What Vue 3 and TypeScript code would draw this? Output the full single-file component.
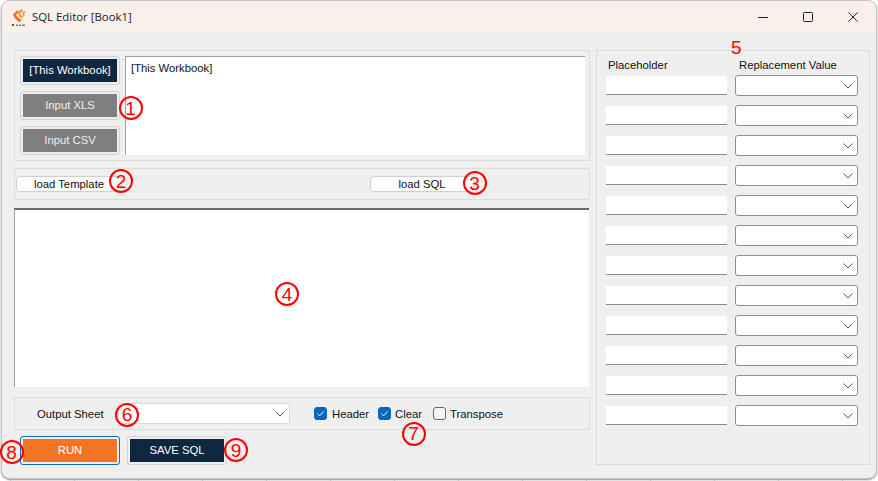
<script setup lang="ts">
const rows: number[] = Array.from({ length: 12 }, (_, i) => i)
const marks = [
  { n: '1', x: 130.5, y: 108 },
  { n: '2', x: 121, y: 181 },
  { n: '3', x: 474.5, y: 183 },
  { n: '4', x: 287, y: 294 },
  { n: '6', x: 127, y: 414.5 },
  { n: '7', x: 413.5, y: 433.5 },
  { n: '8', x: 11.5, y: 452 },
  { n: '9', x: 236, y: 450 },
]
</script>

<template>
  <div class="desk">
    <div class="win">
      <header class="titlebar">
        <div class="title-left">
          <svg class="logo" width="16" height="18" viewBox="0 0 16 18">
            <path d="M2 6.5 L6 2.5 L8 3 L5 7.5 L8 10 L11 13 L8 14 L4 10.5 Z" fill="#f36f1c" />
            <path d="M7 5 L10 1 L12 2 L9 6 L11.5 8.5 L10 10.5 Z" fill="#f58a33" />
            <path d="M11 5 L13 2.5 L14.5 4 L13 6.5 L14 8 L12.5 9.5 Z" fill="#f7a152" />
            <path d="M9 11.5 L11 9.5 L12.5 11 L11 13 Z" fill="#fbd39f" />
            <rect x="1" y="16" width="2" height="2" fill="#555" />
            <rect x="5" y="16.5" width="2" height="1.5" fill="#777" />
            <rect x="8" y="16.5" width="2" height="1.5" fill="#777" />
            <rect x="11" y="16.5" width="3" height="1.5" fill="#777" />
          </svg>
          <span class="title">SQL Editor [Book1]</span>
        </div>
        <div class="controls">
          <svg width="12" height="12" viewBox="0 0 12 12"><path d="M1 6.5H11" stroke="#222" stroke-width="1" /></svg>
          <svg width="12" height="12" viewBox="0 0 12 12"><rect x="1.5" y="1.5" width="9" height="9" rx="1" fill="none" stroke="#222" stroke-width="1" /></svg>
          <svg width="12" height="12" viewBox="0 0 12 12"><path d="M1.5 1.5L10.5 10.5M10.5 1.5L1.5 10.5" stroke="#222" stroke-width="1" /></svg>
        </div>
      </header>
      <main class="body">
        <section class="left">
          <div class="group inputs">
            <div class="btns">
              <button class="btn navy">[This Workbook]</button>
              <button class="btn gray">Input XLS</button>
              <button class="btn gray">Input CSV</button>
            </div>
            <div class="listbox">[This Workbook]</div>
          </div>
          <div class="group loaders">
            <button class="load tpl">load Template</button>
            <button class="load sql">load SQL</button>
          </div>
          <div class="editor"></div>
          <div class="group output">
            <span class="out-label">Output Sheet</span>
            <div class="combo wide">
              <svg width="10" height="6" viewBox="0 0 10 6"><path d="M0.5 0.5L5 5L9.5 0.5" fill="none" stroke="#555" /></svg>
            </div>
            <label class="check first"><span class="box on"><svg width="11" height="11" viewBox="0 0 11 11"><path d="M2.5 5.7L4.6 7.8L8.6 3.4" fill="none" stroke="#fff" stroke-width="1" /></svg></span>Header</label>
            <label class="check second"><span class="box on tight"><svg width="11" height="11" viewBox="0 0 11 11"><path d="M2.5 5.7L4.6 7.8L8.6 3.4" fill="none" stroke="#fff" stroke-width="1" /></svg></span>Clear</label>
            <label class="check"><span class="box tight"></span>Transpose</label>
          </div>
          <div class="actions">
            <button class="btn orange focus">RUN</button>
            <button class="btn navy">SAVE SQL</button>
          </div>
        </section>
        <aside class="group right">
          <div class="heads">
            <span class="head-a">Placeholder</span>
            <span class="head-b">Replacement Value</span>
          </div>
          <div v-for="r in rows" :key="r" class="row">
            <div class="field"></div>
            <div class="combo">
              <svg width="10" height="6" viewBox="0 0 10 6"><path d="M0.5 0.5L5 5L9.5 0.5" fill="none" stroke="#555" /></svg>
            </div>
          </div>
        </aside>
      </main>
      <span class="five">5</span>
    </div>
    <span v-for="m in marks" :key="m.n" class="mark" :style="{ left: m.x - 12 + 'px', top: m.y - 12 + 'px' }">{{ m.n }}</span>
  </div>
</template>

<style>
html, body { margin: 0; padding: 0; overflow: hidden; }
</style>

<style scoped>
.desk {
  position: relative;
  width: 878px;
  height: 481px;
  box-sizing: border-box;
  padding: 1px 2px 3px 2px;
  overflow: hidden;
  background-color: #fff;
  background-image: linear-gradient(to right, #d6d6d6 1px, transparent 1px);
  background-size: 64px 100%;
  background-position: 10px 0;
  font-family: "Liberation Sans", Arial, sans-serif;
  font-size: 11.3px;
  color: #111;
}
.win {
  position: relative;
  height: 100%;
  box-sizing: border-box;
  display: flex;
  flex-direction: column;
  border-radius: 8px;
  background: #efefef;
  box-shadow: 0 0 0 1px #c4c4c4, 0 1px 2px 1px #8e8e8e;
  overflow: hidden;
}
.titlebar {
  height: 31px;
  flex: none;
  display: flex;
  align-items: center;
  justify-content: space-between;
  background: #f9f0eb;
}
.title-left { display: flex; align-items: center; padding-left: 9px; }
.logo { margin-top: 1px; }
.title {
  margin-left: 5px;
  font-family: "Open Sans", sans-serif;
  font-size: 11.4px;
  color: #1c1c1c;
}
.controls { display: flex; gap: 33px; padding-right: 17px; }
.controls svg { display: block; }
.body {
  flex: 1;
  display: flex;
  gap: 6px;
  padding: 18px 6px 13px 12px;
  min-height: 0;
}
.left { width: 576px; display: flex; flex-direction: column; }
.group { border: 1px solid #dcdcdc; box-sizing: border-box; }
.inputs {
  height: 111px;
  display: flex;
  padding: 5px 4px 5px 5px;
  gap: 5px;
}
.btns { display: flex; flex-direction: column; gap: 6px; width: 100px; }
.btn {
  font: inherit;
  color: #fff;
  box-sizing: border-box;
  width: 100px;
  height: 29px;
  padding: 0 0 2px;
  border: 3px solid #efefef;
  border-radius: 3px;
  outline: 1px solid #d2d2d2;
  outline-offset: -1px;
}
.navy { background: #0e2841; }
.gray { background: #7f7f7f; color: #eee; }
.orange { background: #f67524; }
.focus { outline: 1px solid #0f6cbd; }
.listbox {
  flex: 1;
  background: #fff;
  border-top: 1px solid #a0a0a0;
  border-left: 1px solid #a0a0a0;
  padding: 5px;
  line-height: 12px;
  color: #111;
}
.loaders {
  margin-top: 7px;
  height: 32px;
  display: flex;
  align-items: center;
}
.load {
  font: inherit;
  color: #111;
  box-sizing: border-box;
  height: 16px;
  padding: 0;
  background: #fff;
  border: 1px solid #cfcfcf;
  border-radius: 4px;
}
.tpl { width: 106px; margin-left: 1px; text-align: center; }
.sql { width: 104px; margin-left: 248px; }
.editor {
  margin-top: 8px;
  width: 575px;
  height: 180px;
  box-sizing: border-box;
  background: #fff;
  border-top: 2px solid #696969;
  border-left: 1px solid #a0a0a0;
}
.output {
  margin-top: 10px;
  height: 33px;
  display: flex;
  align-items: center;
}
.out-label { margin-left: 22px; width: 81px; }
.combo {
  box-sizing: border-box;
  width: 123px;
  height: 21px;
  flex: none;
  display: flex;
  align-items: center;
  justify-content: flex-end;
  padding-right: 4px;
  background: #fff;
  border: 1px solid #8f8f8f;
  border-radius: 3px;
}
.combo.wide {
  width: 172px;
  border-color: #d8d8d8;
}
.check { display: flex; align-items: center; margin-left: 11px; }
.check.first { margin-left: 24px; }
.check.second { margin-left: 9px; }
.box {
  box-sizing: border-box;
  width: 13px;
  height: 13px;
  margin-right: 5px;
  border: 1px solid #666;
  border-radius: 3px;
  background: #f6f6f6;
  display: flex;
}
.box.tight { margin-right: 4px; }
.box.on { background: #0067c0; border-color: #0067c0; }
.actions { margin-top: 6px; display: flex; gap: 7px; padding-left: 6px; }
.right {
  width: 274px;
  height: 415px;
  display: flex;
  flex-direction: column;
  padding: 6px 11px 0 9px;
}
.heads { display: flex; height: 16px; margin-bottom: 2px; align-items: center; }
.head-a { margin-left: 2px; width: 131px; }
.row { display: flex; height: 30px; flex: none; gap: 8px; align-items: flex-start; }
.field {
  box-sizing: border-box;
  width: 122px;
  height: 19px;
  margin-top: 1px;
  background: #fff;
  border-bottom: 1px solid #8a8a8a;
}
.five {
  position: absolute;
  left: 729px;
  top: 37px;
  font-size: 19px;
  line-height: 20px;
  color: #f00;
}
.mark {
  position: absolute;
  box-sizing: border-box;
  width: 24px;
  height: 24px;
  display: flex;
  align-items: center;
  justify-content: center;
  border: 2px solid #f00;
  border-radius: 50%;
  font-size: 19px;
  line-height: 1;
  color: #f00;
}
</style>
